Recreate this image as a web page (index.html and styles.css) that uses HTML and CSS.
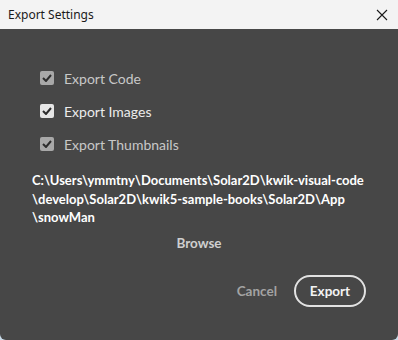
FILE: index.html
```html
<!DOCTYPE html>
<html lang="en">
<head>
  <meta charset="UTF-8" />
  <title>Export Settings</title>
  <link rel="stylesheet" href="styles.css">
</head>
<body>
  <div class="dialog">
    <div class="titlebar">
      <span class="title">Export Settings</span>
      <svg class="close" width="12" height="12" viewBox="0 0 12 12">
        <path d="M1 1 L11 11 M11 1 L1 11" stroke="#1a1a1a" stroke-width="1.1" fill="none"/>
      </svg>
    </div>

    <div class="content">
      <div class="options">
        <label class="option dim">
          <span class="box"><svg width="10" height="8" viewBox="0 0 10 8"><path d="M1 4 L4 7 L9 1" stroke="#2d2d2d" stroke-width="2" fill="none"/></svg></span>
          Export Code
        </label>
        <label class="option">
          <span class="box"><svg width="10" height="8" viewBox="0 0 10 8"><path d="M1 4 L4 7 L9 1" stroke="#2d2d2d" stroke-width="2" fill="none"/></svg></span>
          Export Images
        </label>
        <label class="option dim">
          <span class="box"><svg width="10" height="8" viewBox="0 0 10 8"><path d="M1 4 L4 7 L9 1" stroke="#2d2d2d" stroke-width="2" fill="none"/></svg></span>
          Export Thumbnails
        </label>
      </div>

      <div class="path">C:\Users\ymmtny\Documents\Solar2D\kwik-visual-code<br>\develop\Solar2D\kwik5-sample-books\Solar2D\App<br>\snowMan</div>

      <div class="browse">Browse</div>

      <div class="actions">
        <button class="cancel">Cancel</button>
        <button class="export">Export</button>
      </div>
    </div>
  </div>
</body>
</html>
```

FILE: styles.css
```css
body {
  margin: 0;
  padding: 0;
  background: #c9dcea;
  font-family: Lato, "Open Sans", sans-serif;
}
.dialog {
  width: 398px;
  height: 340px;
  display: flex;
  flex-direction: column;
  border-radius: 0 0 6px 6px;
  overflow: hidden;
}
.titlebar {
  height: 29px;
  background: #f3f3f3;
  display: flex;
  align-items: center;
  justify-content: space-between;
  padding: 0 8px;
  flex-shrink: 0;
}
.title {
  font-family: "Noto Sans", sans-serif;
  font-size: 12px;
  color: #1a1a1a;
}
.close {
  margin-right: 2px;
}
.content {
  flex: 1;
  background: #474747;
  padding: 0 32px;
}
.options {
  display: flex;
  flex-direction: column;
  gap: 19px;
  padding: 42px 0 0 8px;
}
.option {
  display: flex;
  align-items: center;
  gap: 10px;
  font-size: 14px;
  color: #ececec;
  height: 14px;
}
.option.dim {
  color: #c8c8c8;
}
.box {
  width: 14px;
  height: 14px;
  border-radius: 2px;
  background: #e6e6e6;
  display: flex;
  align-items: center;
  justify-content: center;
}
.dim .box {
  background: #a8a8a8;
}
.path {
  margin-top: 20px;
  font-size: 13px;
  font-weight: bold;
  line-height: 18.5px;
  color: #ffffff;
  white-space: nowrap;
}
.browse {
  margin-top: 8px;
  text-align: center;
  font-size: 13.5px;
  font-weight: bold;
  color: #cfcfcf;
}
.actions {
  display: flex;
  justify-content: flex-end;
  align-items: center;
  gap: 17px;
  margin-top: 24px;
}
button {
  font-family: Lato, "Open Sans", sans-serif;
  font-size: 13.5px;
  font-weight: bold;
  background: none;
  cursor: pointer;
}
.cancel {
  border: none;
  color: #a3a3a3;
  padding: 0;
}
.export {
  border: 2px solid #e2e2e2;
  border-radius: 16px;
  color: #f3f3f3;
  width: 72px;
  height: 32px;
  padding: 0;
}
```
